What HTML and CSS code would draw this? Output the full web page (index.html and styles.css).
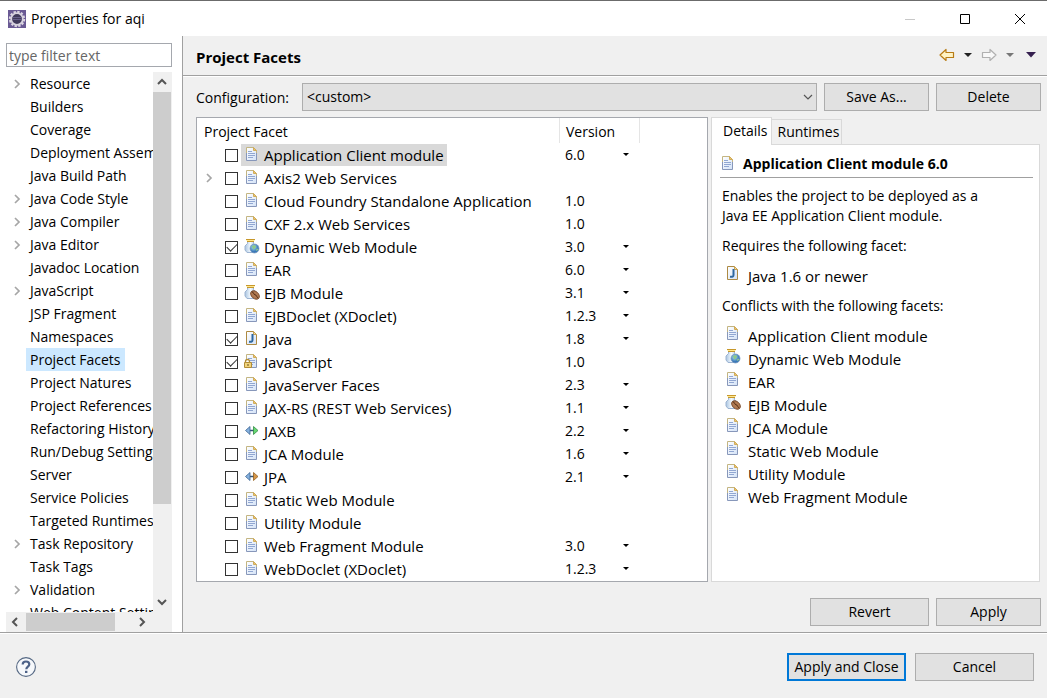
FILE: index.html
```html
<!DOCTYPE html>
<html lang="en">
<head>
<meta charset="utf-8">
<title>Properties for aqi</title>
<link rel="stylesheet" href="styles.css">
</head>
<body>
<svg class="defs" width="0" height="0" aria-hidden="true">
  <defs>
    <linearGradient id="g-glass" x1="0" x2="1"><stop offset="0" stop-color="#a9c4e0"/><stop offset=".5" stop-color="#f4faff"/><stop offset="1" stop-color="#a5c1e2"/></linearGradient>
    <linearGradient id="g-page" x1="0" y1="0" x2="1" y2="1"><stop offset="0" stop-color="#fff"/><stop offset="1" stop-color="#d3e2f7"/></linearGradient>
    <radialGradient id="g-globe" cx=".4" cy=".35"><stop offset="0" stop-color="#a9dcf0"/><stop offset="1" stop-color="#3a78b8"/></radialGradient>
  </defs>
  <symbol id="doc" viewBox="0 0 16 16">
    <path d="M2.500 1.500h7l3 3v10h-10z" fill="url(#g-page)"/>
    <path d="M2.500 8V1.500h7l3 3V8" fill="none" stroke="#c3b582"/>
    <path d="M2.500 7v7.500h10V7" fill="none" stroke="#8797ba"/>
    <path d="M9.500 1.500v3h3z" fill="#ecc66d" stroke="#d0ac5c"/>
    <path d="M4 5.500h4M4 7.500h7M4 9.500h7M4 11.500h5" stroke="#91a7d2"/>
  </symbol>
  <symbol id="java" viewBox="0 0 16 16">
    <path d="M2.500 1.500h7l3 3v10h-10z" fill="url(#g-page)" stroke="#ad8a43"/>
    <path d="M9.500 1.500v3h3z" fill="#f5dda0" stroke="#c8a252"/>
    <path d="M8.500 4v6c0 1.500-1 2-3.500 1.700" fill="none" stroke="#2d679f" stroke-width="2"/>
  </symbol>
  <symbol id="jar" viewBox="0 0 16 16">
    <path d="M3.500 3.500v2L1 8v4l2 2.500h7l2-2.500V8L9.500 5.500v-2z" fill="url(#g-glass)" stroke="#9db4d2"/>
    <path d="M2 1.500h9M3 3.500h7" stroke="#c7982b"/><path d="M2.500 2.500h8" stroke="#ffe78e"/>
  </symbol>
  <symbol id="web" viewBox="0 0 16 16">
    <use href="#jar"/>
    <circle cx="10.500" cy="10.500" r="4.500" fill="url(#g-globe)" stroke="#7a9abd" stroke-width=".7"/>
    <path d="M7.500 8.500L10 7l2 1-.5 2-2 1.500-1-2zM12 11.500l2-1v1.500l-2 1z" fill="#8cc98a"/>
  </symbol>
  <symbol id="ejb" viewBox="0 0 16 16">
    <use href="#jar"/>
    <ellipse cx="11" cy="11" rx="5" ry="3.500" transform="rotate(42 11 11)" fill="#b07a52" stroke="#6d3e20" stroke-width=".8"/>
    <path d="M7.800 7.800c2 0 1.700 3 3.300 3s1.500 2.700 3.200 3.400" fill="none" stroke="#512b14"/>
  </symbol>
  <symbol id="js" viewBox="0 0 16 16">
    <use href="#doc"/>
    <path d="M1.500 10V8.500a2 2 0 0 1 4 0V10" fill="#fff" stroke="#b28d38" stroke-width="1.300"/>
    <path d="M.5 9.500h7v5h-7z" fill="#f2d47c" stroke="#b28d38"/>
    <path d="M4 11v2" stroke="#68501a"/>
  </symbol>
  <symbol id="jaxb" viewBox="0 0 16 16">
    <path d="M6 8.500h4" stroke="#345575" stroke-width="1.500"/>
    <path d="M6 4.500v8l-4.500-4z" fill="#86b2df" stroke="#3e6493" stroke-width=".8"/>
    <path d="M9.500 4.500v8l4.500-4z" fill="#67d771" stroke="#308c43" stroke-width=".8"/>
  </symbol>
  <symbol id="jpa" viewBox="0 0 16 16">
    <path d="M6 8.500h4" stroke="#345575" stroke-width="1.500"/>
    <path d="M6 4.500v8l-4.500-4z" fill="#86b2df" stroke="#3e6493" stroke-width=".8"/>
    <path d="M9.500 4.500v8l4.500-4z" fill="#d79749" stroke="#94601e" stroke-width=".8"/>
  </symbol>
  <symbol id="chev" viewBox="0 0 16 16"><path d="M5 4l4 4-4 4" fill="none" stroke="currentColor" stroke-width="1.700"/></symbol>
  <symbol id="drop" viewBox="0 0 10 10"><path d="M2 3h6L5 6z" fill="currentColor"/></symbol>
</svg>

<div class="window">
  <header class="titlebar">
    <svg class="logo" viewBox="0 0 18 18" aria-hidden="true">
      <rect width="18" height="18" fill="#6a5a94"/>
      <circle cx="9" cy="9" r="7.200" fill="none" stroke="#ddd8e3" stroke-width="2" stroke-dasharray="2.400 1.370"/>
      <circle cx="9" cy="9" r="5.800" fill="#413a5c" stroke="#d8d3df" stroke-width="1.800"/>
      <path d="M4.500 7.500h9M4.500 9.500h9" stroke="#67608a"/>
    </svg>
    <span class="window-title">Properties for aqi</span>
    <div class="window-controls">
      <button type="button" aria-label="Minimize" disabled><svg viewBox="0 0 12 12"><path d="M1 6.500h10" stroke="#c8c8c8"/></svg></button>
      <button type="button" aria-label="Maximize"><svg viewBox="0 0 12 12"><path d="M1.500 1.500h9v9h-9z" fill="none" stroke="#000"/></svg></button>
      <button type="button" aria-label="Close"><svg viewBox="0 0 12 12"><path d="M1 1l10 10M11 1L1 11" stroke="#000"/></svg></button>
    </div>
  </header>

  <div class="content">
    <aside class="sidebar">
      <input class="filter" type="text" placeholder="type filter text" aria-label="Filter properties">
      <div class="tree-frame">
        <ul class="tree" id="tree"></ul>
        <div class="vscroll" aria-hidden="true">
          <svg viewBox="0 0 16 16"><path d="M4 10l4-4 4 4" class="arrow"/></svg>
          <div class="vtrack"><div class="vthumb"></div></div>
          <svg viewBox="0 0 16 16"><path d="M4 6l4 4 4-4" class="arrow"/></svg>
        </div>
        <div class="hscroll" aria-hidden="true">
          <svg viewBox="0 0 16 16"><path d="M10 4L6 8l4 4" class="arrow"/></svg>
          <div class="htrack"><div class="hthumb"></div></div>
          <svg viewBox="0 0 16 16"><path d="M6 4l4 4-4 4" class="arrow"/></svg>
        </div>
        <div class="corner"></div>
      </div>
    </aside>

    <main class="page">
      <div class="page-head">
        <h1>Project Facets</h1>
        <div class="nav">
          <button type="button" aria-label="Back"><svg class="nav-arrow" viewBox="0 0 16 14"><path d="M1 7l6-5.500V4.500h7.500v5H7v3z" fill="#fff3c4" stroke="#b87c16" stroke-width="1.200" stroke-linejoin="round"/></svg></button>
          <button type="button" aria-label="Back history"><svg class="nav-drop" viewBox="0 0 10 6"><path d="M1 1h8L5 5z" fill="#222"/></svg></button>
          <button type="button" aria-label="Forward" disabled><svg class="nav-arrow" viewBox="0 0 16 14"><path d="M15 7L9 1.500V4.500H1.500v5H9v3z" fill="#f8f8f8" stroke="#b0b0b0" stroke-width="1.200" stroke-linejoin="round"/></svg></button>
          <button type="button" aria-label="Forward history" disabled><svg class="nav-drop" viewBox="0 0 10 6"><path d="M1 1h8L5 5z" fill="#777"/></svg></button>
          <button type="button" aria-label="View menu"><svg class="nav-drop" viewBox="0 0 10 6"><path d="M0 0h10L5 5.500z" fill="#35204f"/></svg></button>
        </div>
      </div>

      <div class="page-body">
        <div class="config">
          <label for="config">Configuration:</label>
          <span class="select-wrap">
            <select id="config"><option>&lt;custom&gt;</option></select>
            <svg viewBox="0 0 10 10" aria-hidden="true"><path d="M1 3l4 4 4-4" fill="none" stroke="#555" stroke-width="1.200"/></svg>
          </span>
          <button type="button" class="btn">Save As...</button>
          <button type="button" class="btn">Delete</button>
        </div>

        <div class="panes">
          <div class="facets">
            <table>
              <colgroup><col><col class="col-version"><col class="col-rest"></colgroup>
              <thead><tr><th scope="col">Project Facet</th><th scope="col">Version</th><th></th></tr></thead>
              <tbody id="facets"></tbody>
            </table>
          </div>

          <section class="details">
            <div class="tabs" role="tablist">
              <button type="button" role="tab" class="tab active" aria-selected="true">Details</button>
              <button type="button" role="tab" class="tab" aria-selected="false">Runtimes</button>
            </div>
            <div class="tab-panel" role="tabpanel">
              <h2><svg class="icon" aria-hidden="true"><use href="#doc"/></svg>Application Client module 6.0</h2>
              <p>Enables the project to be deployed as a<br>Java EE Application Client module.</p>
              <p>Requires the following facet:</p>
              <ul class="facet-list"><li><svg class="icon" aria-hidden="true"><use href="#java"/></svg>Java 1.6 or newer</li></ul>
              <p>Conflicts with the following facets:</p>
              <ul class="facet-list">
                <li><svg class="icon" aria-hidden="true"><use href="#doc"/></svg>Application Client module</li>
                <li><svg class="icon" aria-hidden="true"><use href="#web"/></svg>Dynamic Web Module</li>
                <li><svg class="icon" aria-hidden="true"><use href="#doc"/></svg>EAR</li>
                <li><svg class="icon" aria-hidden="true"><use href="#ejb"/></svg>EJB Module</li>
                <li><svg class="icon" aria-hidden="true"><use href="#doc"/></svg>JCA Module</li>
                <li><svg class="icon" aria-hidden="true"><use href="#doc"/></svg>Static Web Module</li>
                <li><svg class="icon" aria-hidden="true"><use href="#doc"/></svg>Utility Module</li>
                <li><svg class="icon" aria-hidden="true"><use href="#doc"/></svg>Web Fragment Module</li>
              </ul>
            </div>
          </section>
        </div>

        <div class="page-actions">
          <button type="button" class="btn wide">Revert</button>
          <button type="button" class="btn">Apply</button>
        </div>
      </div>
    </main>
  </div>

  <footer class="footer">
    <button type="button" class="help" aria-label="Help">
      <svg viewBox="0 0 20 20"><circle cx="10" cy="10" r="9.400" fill="#f6f8fb" stroke="#566984" stroke-width="1.100"/><path d="M6.700 7.600c0-2 1.400-3.100 3.300-3.100s3.300 1 3.300 2.700c0 2.400-3 2.300-3 5" fill="none" stroke="#4c6187" stroke-width="2.200"/><path d="M9 13.800h2.400v2.200H9z" fill="#4c6187"/></svg>
    </button>
    <button type="button" class="btn wide primary">Apply and Close</button>
    <button type="button" class="btn wide">Cancel</button>
  </footer>
</div>
<script src="app.js"></script>
</body>
</html>
```
FILE: styles.css
```css
* { box-sizing: border-box; }

body {
  margin: 0;
  background: #f0f0f0;
  color: #000;
  font: 14px/20px "Open Sans", "Noto Sans", sans-serif;
}

button, input, select { font: inherit; color: inherit; }
button { padding: 0; border: 0; background: none; }
ul { margin: 0; padding: 0; list-style: none; }
svg { display: block; flex: none; }
.defs { position: absolute; }

.window {
  display: flex;
  flex-direction: column;
  height: 100vh;
  border-top: 1px solid #6b6b6b;
}

/* Title bar */
.titlebar {
  display: flex;
  align-items: center;
  height: 35px;
  padding-left: 8px;
  gap: 5px;
  background: #fff;
}
.logo { width: 18px; height: 18px; }
.window-controls { display: flex; margin-left: auto; }
.window-controls button { display: grid; place-items: center; width: 55px; height: 34px; }
.window-controls svg { width: 12px; height: 12px; }

.content { display: flex; flex: 1; min-height: 0; }

/* Property tree */
.sidebar {
  display: flex;
  flex-direction: column;
  width: 183px;
  padding: 7px 10px 0 6px;
  gap: 5px;
  background: #fff;
  border-right: 1px solid #a0a0a0;
}
.filter {
  width: 100%;
  height: 24px;
  padding: 0 2px;
  border: 1px solid #a5a8ae;
}
.filter::placeholder { color: #666; opacity: 1; }
.tree-frame {
  display: grid;
  grid-template: minmax(0, 1fr) 20px / minmax(0, 1fr) 19px;
  flex: 1;
  min-height: 0;
}
.tree { overflow: hidden; }
.tree li { display: flex; align-items: center; height: 23px; white-space: nowrap; }
.tree svg, .expander { width: 16px; height: 16px; color: #a6a6a6; }
.tree svg { margin-left: 4px; }
.tree span { height: 23px; padding: 0 4px; line-height: 23px; }
.tree li.leaf { padding-left: 20px; }
.tree .selected span { background: #cce8ff; }
.arrow { fill: none; stroke: #555; stroke-width: 2; }
.vscroll, .hscroll { display: flex; background: #f0f0f0; }
.vscroll { flex-direction: column; align-items: center; padding: 2px 1px 2px 0; }
.hscroll { align-items: center; padding: 0 3px 0 1px; }
.vscroll > svg, .hscroll > svg { width: 16px; height: 16px; }
.vtrack { flex: 1; width: 100%; padding-top: 2px; }
.vthumb { height: 82%; background: #cdcdcd; }
.htrack { flex: 1; height: 100%; padding: 1px 0 1px 3px; }
.hthumb { width: 82%; height: 100%; background: #cdcdcd; }
.corner { background: #f0f0f0; }

/* Page */
.page { display: flex; flex: 1; flex-direction: column; min-width: 0; }
.page-head {
  display: flex;
  align-items: center;
  justify-content: space-between;
  height: 40px;
  padding: 3px 11px 0 13px;
  border-bottom: 1px solid #a0a0a0;
  box-shadow: 0 1px #fff;
}
h1, h2 { margin: 0; font-weight: 700; }
h1 { font-size: 15px; }
h2 { font-size: 14px; }
.nav { display: flex; align-items: center; gap: 8px; padding-bottom: 5px; }
.nav-arrow { width: 16px; height: 14px; }
.nav-drop { width: 10px; height: 6px; }
.nav button:last-child { margin-left: 3px; }
.page-body {
  display: flex;
  flex: 1;
  flex-direction: column;
  gap: 6px;
  min-height: 0;
  padding: 7px 6px 6px 13px;
}

.btn {
  width: 105px;
  height: 28px;
  border: 1px solid #adadad;
  background: #e1e1e1;
  white-space: nowrap;
}
.btn.wide { width: 119px; }
.btn.primary { border: 2px solid #0078d7; }

.config { display: flex; align-items: center; gap: 7px; }
.config label { padding: 1px 6px 0 0; }
.select-wrap { position: relative; flex: 1; }
.select-wrap svg { position: absolute; top: 9px; right: 4px; width: 10px; height: 10px; pointer-events: none; }
select {
  display: block;
  width: 100%;
  height: 28px;
  padding: 0 4px;
  appearance: none;
  border: 1px solid #adadad;
  border-radius: 0;
  background: #e1e1e1;
}

.panes {
  display: grid;
  grid-template-columns: minmax(0, 512fr) minmax(0, 330fr);
  gap: 3px;
  flex: 1;
  min-height: 0;
}

/* Facet table */
.facets { overflow: hidden; border: 1px solid #a5a8ae; background: #fff; }
.facets table { width: 100%; border-spacing: 0; table-layout: fixed; }
.col-version { width: 80px; }
.col-rest { width: 67px; }
.facets th { height: 25px; padding: 2px 7px 0; border-right: 1px solid #e5e5e5; font-weight: 400; text-align: left; }
.facets th:nth-child(2) { padding-left: 6px; }
.facets th:last-child { border: 0; }
.facets td { height: 23px; padding: 0 5px; }
.facet { display: flex; align-items: center; }
.expander { flex: none; margin-right: 7px; }
.facet label { display: flex; align-items: center; height: 22px; margin-left: 3px; padding: 0 3px 0 3px; gap: 4px; font-size: 15px; white-space: nowrap; }
.facet.selected label { background: #d9d9d9; }
.icon { width: 16px; height: 16px; margin-bottom: 2px; }
input[type="checkbox"] {
  display: grid;
  place-items: center;
  flex: none;
  width: 13px;
  height: 13px;
  margin: 1px 0 0;
  appearance: none;
  border: 1px solid #333;
  background: #fff;
}
input[type="checkbox"]:checked::after {
  content: "";
  width: 9px;
  height: 5px;
  margin-bottom: 3px;
  border: solid #333;
  border-width: 0 0 1px 1px;
  transform: rotate(-45deg);
}
.version { display: flex; align-items: center; justify-content: space-between; padding-right: 4px; }
.version svg { width: 10px; height: 10px; }

/* Details */
.details { display: flex; flex-direction: column; min-width: 0; padding-right: 1px; }
.tabs { display: flex; align-items: flex-end; height: 27px; }
.tab { height: 25px; padding: 0 2px 0 6px; border: 1px solid #d9d9d9; border-bottom: 0; border-left: 0; }
.tab.active { height: 28px; margin-bottom: -1px; padding: 0 3px 2px 11px; border-left: 1px solid #d9d9d9; background: #fff; z-index: 1; }
.tab-panel { flex: 1; min-height: 0; padding: 5px 6px 0 8px; border: 1px solid #d9d9d9; background: #fff; }
h2 { display: flex; align-items: center; height: 28px; gap: 7px; border-bottom: 1px solid #a0a0a0; white-space: nowrap; }
.tab-panel p { margin: 8px 2px 10px; white-space: nowrap; }
.tab-panel p + p { margin: 0 2px 8px; }
.facet-list { padding-left: 5px; font-size: 15px; }
.tab-panel .facet-list + p { margin: 9px 2px 8px; }
.facet-list li { display: flex; align-items: center; height: 23px; gap: 7px; }
.facet-list .icon { margin-bottom: 5px; }

.page-actions { display: flex; justify-content: flex-end; gap: 7px; padding-top: 10px; }

/* Footer */
.footer {
  display: flex;
  align-items: center;
  height: 66px;
  padding: 2px 13px 0 16px;
  gap: 9px;
  border-top: 1px solid #a0a0a0;
  box-shadow: inset 0 1px #fff;
}
.help { margin-right: auto; }
.help svg { width: 20px; height: 20px; }
```
FILE: app.js
```js
const properties = [
  ['Resource', 1], ['Builders'], ['Coverage'], ['Deployment Assembly'], ['Java Build Path'],
  ['Java Code Style', 1], ['Java Compiler', 1], ['Java Editor', 1], ['Javadoc Location'],
  ['JavaScript', 1], ['JSP Fragment'], ['Namespaces'], ['Project Facets'], ['Project Natures'],
  ['Project References'], ['Refactoring History'], ['Run/Debug Settings'], ['Server'],
  ['Service Policies'], ['Targeted Runtimes'], ['Task Repository', 1], ['Task Tags'],
  ['Validation', 1], ['Web Content Settings']
];

document.getElementById('tree').innerHTML = properties.map(([name, parent]) => {
  const classes = (parent ? '' : 'leaf') + (name === 'Project Facets' ? ' selected' : '');
  const chevron = parent ? '<svg aria-hidden="true"><use href="#chev"/></svg>' : '';
  return `<li class="${classes}">${chevron}<span>${name}</span></li>`;
}).join('');

// name, icon, version, has version menu, checked
const facets = [
  ['Application Client module', 'doc', '6.0', 1], ['Axis2 Web Services', 'doc'],
  ['Cloud Foundry Standalone Application', 'doc', '1.0'], ['CXF 2.x Web Services', 'doc', '1.0'],
  ['Dynamic Web Module', 'web', '3.0', 1, 1], ['EAR', 'doc', '6.0', 1],
  ['EJB Module', 'ejb', '3.1', 1], ['EJBDoclet (XDoclet)', 'doc', '1.2.3', 1],
  ['Java', 'java', '1.8', 1, 1], ['JavaScript', 'js', '1.0', 0, 1],
  ['JavaServer Faces', 'doc', '2.3', 1], ['JAX-RS (REST Web Services)', 'doc', '1.1', 1],
  ['JAXB', 'jaxb', '2.2', 1], ['JCA Module', 'doc', '1.6', 1], ['JPA', 'jpa', '2.1', 1],
  ['Static Web Module', 'doc'], ['Utility Module', 'doc'],
  ['Web Fragment Module', 'doc', '3.0', 1], ['WebDoclet (XDoclet)', 'doc', '1.2.3', 1]
];

document.getElementById('facets').innerHTML = facets.map(([name, icon, version, menu, checked], i) => `
  <tr>
    <td><div class="facet${i === 0 ? ' selected' : ''}">
      <svg class="expander" aria-hidden="true">${name.startsWith('Axis2') ? '<use href="#chev"/>' : ''}</svg>
      <input type="checkbox" id="facet-${i}"${checked ? ' checked' : ''}>
      <label for="facet-${i}"><svg class="icon" aria-hidden="true"><use href="#${icon}"/></svg>${name}</label>
    </div></td>
    <td><div class="version">${version || ''}${menu ? `<button type="button" aria-label="Change ${name} version"><svg><use href="#drop"/></svg></button>` : ''}</div></td>
    <td></td>
  </tr>`).join('');
```
